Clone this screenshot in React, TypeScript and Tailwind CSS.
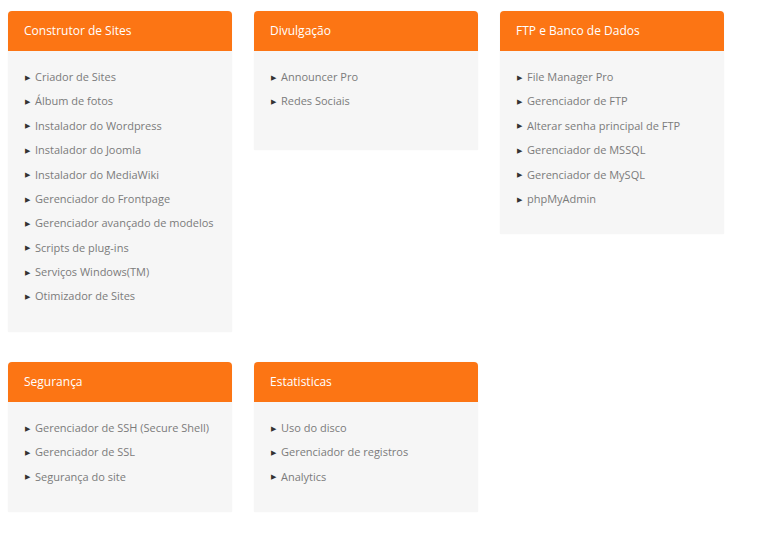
import React from "react";

const cards: { title: string; items: string[]; minBody?: string }[][] = [
  [
    {
      title: "Construtor de Sites",
      items: [
        "Criador de Sites",
        "Álbum de fotos",
        "Instalador do Wordpress",
        "Instalador do Joomla",
        "Instalador do MediaWiki",
        "Gerenciador do Frontpage",
        "Gerenciador avançado de modelos",
        "Scripts de plug-ins",
        "Serviços Windows(TM)",
        "Otimizador de Sites",
      ],
    },
    { title: "Divulgação", items: ["Announcer Pro", "Redes Sociais"], minBody: "min-h-[99px]" },
    {
      title: "FTP e Banco de Dados",
      items: [
        "File Manager Pro",
        "Gerenciador de FTP",
        "Alterar senha principal de FTP",
        "Gerenciador de MSSQL",
        "Gerenciador de MySQL",
        "phpMyAdmin",
      ],
    },
  ],
  [
    {
      title: "Segurança",
      items: ["Gerenciador de SSH (Secure Shell)", "Gerenciador de SSL", "Segurança do site"],
      minBody: "pb-[21px]",
    },
    {
      title: "Estatisticas",
      items: ["Uso do disco", "Gerenciador de registros", "Analytics"],
      minBody: "pb-[21px]",
    },
  ],
];

function Card({ title, items, minBody }: { title: string; items: string[]; minBody?: string }) {
  return (
    <div className="w-[224px] rounded-t-[4px] overflow-hidden shadow-[0_0_2px_rgba(0,0,0,0.04)]">
      <div className="h-[40px] bg-[#fc7514] flex items-center px-[16px] text-white text-[12px]">
        {title}
      </div>
      <ul className={`bg-[#f6f6f6] pt-[14px] pb-[23px] px-[17px] ${minBody ?? ""}`}>
        {items.map((it) => (
          <li
            key={it}
            className="flex items-center h-[24.4px] text-[11px] text-[#7b7b7b] whitespace-nowrap"
          >
            <span className="text-[7px] text-[#333] mr-[5px] leading-none">▶</span>
            <span>{it}</span>
          </li>
        ))}
      </ul>
    </div>
  );
}

export default function App() {
  return (
    <div
      className="bg-white w-[768px] h-[542px] pl-[8px] pt-[11px] flex flex-col gap-[30px]"
      style={{ fontFamily: '"Open Sans", "Noto Sans", sans-serif' }}
    >
      {cards.map((row, i) => (
        <div key={i} className="flex items-start gap-[22px]">
          {row.map((c) => (
            <Card key={c.title} {...c} />
          ))}
        </div>
      ))}
    </div>
  );
}
